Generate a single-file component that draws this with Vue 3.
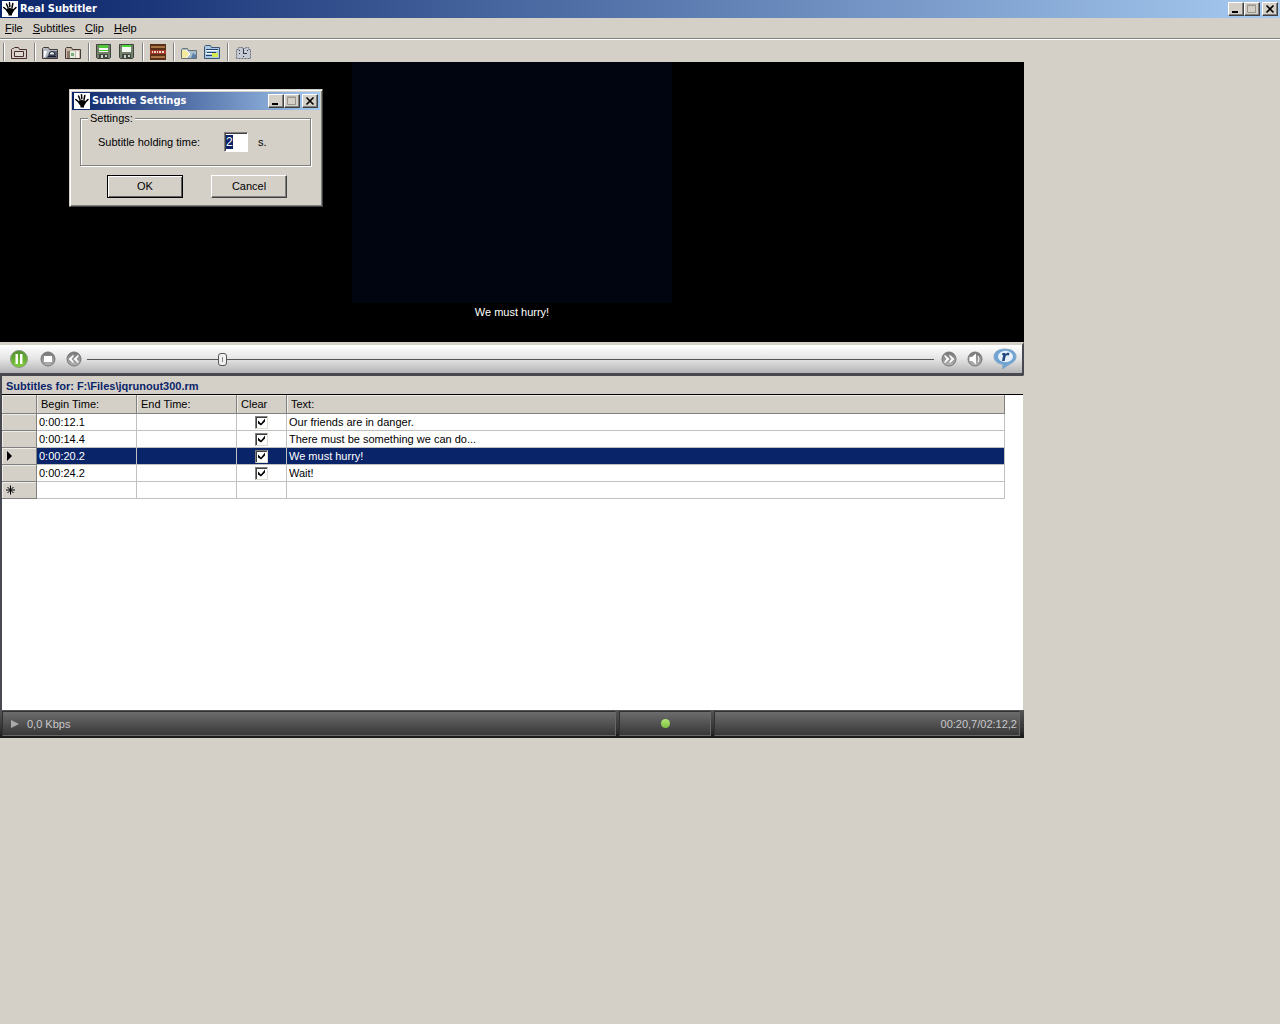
<script setup>
import { onMounted, ref } from 'vue'

const menus = ['File', 'Subtitles', 'Clip', 'Help']

const tools = [
  ['open'],
  ['clip', 'import'],
  ['save', 'saveAs'],
  ['encode'],
  ['preview', 'details'],
  ['time'],
]

const subtitles = ref([
  { begin: '0:00:12.1', end: '', clear: true, text: 'Our friends are in danger.' },
  { begin: '0:00:14.4', end: '', clear: true, text: 'There must be something we can do...' },
  { begin: '0:00:20.2', end: '', clear: true, text: 'We must hurry!' },
  { begin: '0:00:24.2', end: '', clear: true, text: 'Wait!' },
])
const current = ref(2)
const position = ref(207)
const holdingTime = ref('2')
const holdingField = ref(null)

onMounted(() => {
  holdingField.value.focus({ preventScroll: true })
  holdingField.value.select()
})
</script>

<template>
  <div class="window">
    <header class="titlebar">
      <svg class="hand" viewBox="0 0 16 16" aria-hidden="true">
        <rect width="16" height="16" fill="#fff" />
        <g stroke="#000" stroke-linecap="round" fill="none">
          <path d="M4.500 3l1.500 3.500M7.500 1.800l.3 4M10.800 2.500l-.8 4" stroke-width="1.500" />
          <path d="M1.800 6.500l3.500 3M14 6.500l-3.500 3.500" stroke-width="1.600" />
        </g>
        <path d="M5 7.500L7.500 7l3.500.5.7 2.500-1.700 3v1.500H6.500V13L4.300 10z" fill="#000" />
      </svg>
      <h1>Real Subtitler</h1>
      <div class="controls">
        <button type="button" aria-label="Minimize"><svg viewBox="0 0 12 10"><path d="M2 7h6v2H2z" fill="#000" /></svg></button>
        <button type="button" aria-label="Maximize"><svg viewBox="0 0 12 10"><path d="M1.500 1.500h8v7h-8zM1 1h9" fill="none" stroke="#98948c" /></svg></button>
        <button type="button" aria-label="Close" class="close"><svg viewBox="0 0 12 10"><path d="M2.500 1.500l7 7M9.500 1.500l-7 7" stroke="#000" stroke-width="1.600" /></svg></button>
      </div>
    </header>

    <nav class="menu">
      <a v-for="m in menus" :key="m" href="#"><u>{{ m[0] }}</u>{{ m.slice(1) }}</a>
    </nav>

    <div class="toolbar">
      <div v-for="(group, g) in tools" :key="g" class="group">
        <button v-for="t in group" :key="t" type="button" :aria-label="t">
          <svg viewBox="0 0 16 16">
            <template v-if="t === 'open'">
              <path d="M.5 14.500v-9l1-1h1l1-1h4l1 2h7v9z" fill="#d4d0c8" stroke="#4a2c2c" />
              <path d="M3.500 7.500h9v5h-9z" fill="#dedad2" stroke="#4a2c2c" />
            </template>
            <template v-else-if="t === 'clip'">
              <path d="M.5 14.500v-10l1-1h5l1 2h8v9z" fill="#b4b8c0" stroke="#443838" />
              <path d="M2 7h3l-2 6H2z" fill="#fff" />
              <path d="M4 14l5-7h6v7z" fill="#5a6478" />
              <path d="M7 11q0-3.500 3-3.500t3 3.500z" fill="#e8ecf4" stroke="#181c28" />
              <path d="M6 12.500h8" stroke="#181c28" />
            </template>
            <template v-else-if="t === 'import'">
              <path d="M.5 14.500v-10l1-1h5l1 2h8v9z" fill="#c9b8a8" stroke="#443838" />
              <path d="M2 7h3v7H2z" fill="#8a7868" />
              <path d="M5 7h5v7H5z" fill="#e2ecdc" />
              <path d="M6 9h3v3H6z" fill="#7cac80" />
              <path d="M11 7h3v7h-3z" fill="#f4f0ea" />
            </template>
            <template v-else-if="t === 'save' || t === 'saveAs'">
              <path d="M.5 .5h14v13l-1 1h-12l-1-1z" fill="#73806c" stroke="#3c463c" />
              <path d="M3 1h9v7H3z" fill="#f4f8f2" />
              <path v-if="t === 'save'" d="M3 1h9v3H3zM3 6h9v1H3z" fill="#4fc83c" />
              <path v-else d="M3 1h9v2H3z" fill="#4fd83c" />
              <path d="M3 10h9v4H3z" fill="#40483e" />
              <path d="M5 11h2v3H5zM9 11h2v2H9z" fill="#ccc" />
            </template>
            <template v-else-if="t === 'encode'">
              <path d="M0 0h16v16H0z" fill="#5a2f18" />
              <path d="M1 2h14v2H1zM1 12h14v2H1z" fill="#a87444" />
              <path d="M0 6h16v4H0z" fill="#a43828" />
              <path d="M2 7h1v2H2zM4 7h2v2H4zM7 7h1v2H7zM9 7h2v2H9zM12 7h2v2h-2z" fill="#f6dcd0" />
            </template>
            <template v-else-if="t === 'preview'">
              <path d="M.5 14.500v-9l1-1h5l1 2h8v8z" fill="#a9c0cc" stroke="#6a7478" />
              <path d="M1 6h4l4 4-4 4H1z" fill="#f5e8a0" />
              <path d="M5 6l4 4-4 4" fill="none" stroke="#fff" />
              <path d="M12 9l3 2v3h-5z" fill="#5c80ac" />
            </template>
            <template v-else-if="t === 'details'">
              <path d="M.5 14.500v-12l1-1h5l1 2h8v11z" fill="#a8c8e4" stroke="#3c5874" />
              <path d="M2 5h12v1H2zM3 8h9v1H3zM2 11h6v1H2z" fill="#24446c" />
              <path d="M2 6h12v1H2zM2 9h6v1H2z" fill="#f2f8fc" />
              <path d="M8 9h6v4H8z" fill="#d8e850" />
            </template>
            <template v-else>
              <path d="M1.500 14.500v-9h2v-2h4v1h3v-1h3v2h2v9z" fill="#c6cad2" stroke="#666c7c" stroke-dasharray="2 1" />
              <path d="M8 5h1v5H8zM9 9h3v1H9zM4 9h1v1H4zM8 12h1v1H8zM12 6h1v1h-1zM4 6h1v1H4z" fill="#303648" />
            </template>
          </svg>
        </button>
      </div>
    </div>

    <main class="workspace">
      <section class="video">
        <div class="picture"></div>
        <p>We must hurry!</p>
      </section>

      <section class="player">
        <div class="keys">
          <button type="button" aria-label="Pause" class="pause">
            <svg viewBox="0 0 22 22">
              <defs>
                <linearGradient id="green" x1="0" y1="0" x2="0" y2="1"><stop offset="0" stop-color="#4f8f2c" /><stop offset="1" stop-color="#7fd038" /></linearGradient>
                <linearGradient id="steel" x1="0" y1="0" x2="0" y2="1"><stop offset="0" stop-color="#777" /><stop offset="1" stop-color="#b4b4b4" /></linearGradient>
              </defs>
              <circle cx="11" cy="11" r="8.500" fill="url(#green)" stroke="#8a9a80" />
              <path d="M7.500 6h2.500v10H7.500zM12 6h2.500v10H12z" fill="#fff" />
            </svg>
          </button>
          <button type="button" aria-label="Stop">
            <svg viewBox="0 0 16 16"><circle cx="8" cy="8" r="7" fill="url(#steel)" stroke="#777" /><rect x="4" y="5" width="8" height="6" fill="#fff" /></svg>
          </button>
          <button type="button" aria-label="Rewind">
            <svg viewBox="0 0 16 16"><circle cx="8" cy="8" r="7" fill="url(#steel)" stroke="#777" /><path d="M7.500 3.500v2L5.500 8l2 2.500v2L2.500 8zM12.500 3.500v2l-2 2.500 2 2.500v2L7.500 8z" fill="#fff" /></svg>
          </button>
        </div>
        <input v-model="position" type="range" min="0" max="1322" aria-label="Position" class="seek" />
        <div class="keys">
          <button type="button" aria-label="Fast forward">
            <svg viewBox="0 0 16 16"><circle cx="8" cy="8" r="7" fill="url(#steel)" stroke="#777" /><path d="M3.500 3.500v2l2 2.500-2 2.500v2L8.500 8zM8.500 3.500v2l2 2.500-2 2.500v2l5-4.500z" fill="#fff" /></svg>
          </button>
          <button type="button" aria-label="Volume">
            <svg viewBox="0 0 16 16"><circle cx="8" cy="8" r="7" fill="url(#steel)" stroke="#777" /><path d="M2.500 6H5l4-3.500v11L5 10H2.500z" fill="#fff" /><path d="M11 5q2 3 0 6" fill="none" stroke="#fff" /></svg>
          </button>
          <button type="button" aria-label="RealPlayer" class="real">
            <svg viewBox="0 0 24 22">
              <path d="M12 1C18.500 1 23 4 23 8.500c0 4-3.500 6.500-7 8L9.500 21l.5-4.700C4.500 15.500 1 13 1 8.500 1 4 5.500 1 12 1z" fill="#6ea3d2" stroke="#86a9c8" />
              <ellipse cx="12.500" cy="8.500" rx="7.500" ry="5.700" fill="#e6f0f8" />
              <path d="M9.500 5h3l-.3 1.500c1-1.500 2.500-2 4.300-1.500l-.7 2.500c-1.500-.5-2.700 0-3.300 1.200L11.700 13H9l1.200-6H9z" fill="#234a80" />
            </svg>
          </button>
        </div>
      </section>

      <section class="list">
        <h2>Subtitles for: F:\Files\jqrunout300.rm</h2>
        <table>
          <colgroup><col class="c-mark" /><col class="c-time" /><col class="c-time" /><col class="c-clear" /><col /></colgroup>
          <thead>
            <tr><th></th><th>Begin Time:</th><th>End Time:</th><th>Clear</th><th>Text:</th></tr>
          </thead>
          <tbody>
            <tr v-for="(s, i) in subtitles" :key="i" :class="{ selected: i === current }" @click="current = i">
              <th scope="row"><svg v-if="i === current" viewBox="0 0 10 10"><path d="M2 0l5 5-5 5z" /></svg></th>
              <td>{{ s.begin }}</td>
              <td>{{ s.end }}</td>
              <td class="tick"><input v-model="s.clear" type="checkbox" :aria-label="'Clear ' + s.begin" /></td>
              <td>{{ s.text }}</td>
            </tr>
            <tr>
              <th scope="row"><svg viewBox="0 0 10 10"><path d="M5.500 .5v9M1 5h9M2.500 2l6 6M8.500 2l-6 6" stroke="#000" /></svg></th>
              <td></td><td></td><td></td><td></td>
            </tr>
          </tbody>
        </table>
      </section>

      <footer class="status">
        <div class="rate"><svg viewBox="0 0 8 8"><path d="M0 0l8 4-8 4z" fill="#aaa" /></svg>0,0 Kbps</div>
        <div class="led"><span></span></div>
        <div class="clock">00:20,7/02:12,2</div>
      </footer>
    </main>

    <form class="dialog" role="dialog" aria-labelledby="dialog-title" @submit.prevent>
      <div class="titlebar">
        <svg class="hand" viewBox="0 0 16 16" aria-hidden="true">
          <rect width="16" height="16" fill="#fff" />
          <g stroke="#000" stroke-linecap="round" fill="none">
            <path d="M4.500 3l1.500 3.500M7.500 1.800l.3 4M10.800 2.500l-.8 4" stroke-width="1.500" />
            <path d="M1.800 6.500l3.500 3M14 6.500l-3.500 3.500" stroke-width="1.600" />
          </g>
          <path d="M5 7.500L7.500 7l3.500.5.7 2.500-1.700 3v1.500H6.500V13L4.300 10z" fill="#000" />
        </svg>
        <h1 id="dialog-title">Subtitle Settings</h1>
        <div class="controls">
          <button type="button" aria-label="Minimize"><svg viewBox="0 0 12 10"><path d="M2 7h6v2H2z" fill="#000" /></svg></button>
          <button type="button" aria-label="Maximize"><svg viewBox="0 0 12 10"><path d="M1.500 1.500h8v7h-8zM1 1h9" fill="none" stroke="#98948c" /></svg></button>
          <button type="button" aria-label="Close" class="close"><svg viewBox="0 0 12 10"><path d="M2.500 1.500l7 7M9.500 1.500l-7 7" stroke="#000" stroke-width="1.600" /></svg></button>
        </div>
      </div>
      <fieldset>
        <legend>Settings:</legend>
        <div class="field">
          <label for="holding">Subtitle holding time:</label>
          <input id="holding" ref="holdingField" v-model="holdingTime" type="text" />
          <span>s.</span>
        </div>
      </fieldset>
      <div class="actions">
        <button type="submit" class="default">OK</button>
        <button type="button">Cancel</button>
      </div>
    </form>
  </div>
</template>

<style>
body {
  margin: 0;
  background: #d4d0c8;
}
</style>

<style scoped>
.window {
  position: relative;
  color: #000;
  font: 11px/14px "Liberation Sans", Arial, sans-serif;
}
.window *,
.window *::before {
  box-sizing: border-box;
}
button,
input {
  font: inherit;
  color: inherit;
  padding: 0;
  margin: 0;
}
button {
  border: 0;
  background: none;
}
svg {
  display: block;
}

.titlebar {
  display: flex;
  align-items: center;
  height: 18px;
  padding: 0 2px;
  background: linear-gradient(90deg, #0a246a, #a6caf0);
  color: #fff;
}
.hand {
  width: 16px;
  height: 16px;
}
.titlebar h1 {
  flex: 1;
  margin: 0 0 0 2px;
  font: bold 11px/14px "DejaVu Sans Condensed", "DejaVu Sans", sans-serif;
}
.controls {
  display: flex;
}
.controls button {
  width: 16px;
  height: 14px;
  padding: 1px;
  background: #d4d0c8;
  border: 1px solid;
  border-color: #fff #404040 #404040 #fff;
  box-shadow: inset -1px -1px #808080;
}
.controls svg {
  width: 12px;
  height: 10px;
}
.controls .close {
  margin-left: 2px;
}

.menu {
  display: flex;
  gap: 10px;
  height: 20px;
  padding: 0 5px;
  line-height: 20px;
}
.menu a {
  color: #000;
  text-decoration: none;
}

.toolbar {
  display: flex;
  height: 24px;
  border-top: 1px solid #808080;
  box-shadow: inset 0 1px #fff;
}
.group {
  display: flex;
  align-items: center;
  padding-top: 2px;
}
.group::before {
  content: "";
  width: 2px;
  height: 18px;
  margin: 0 3px;
  border-left: 1px solid #808080;
  border-right: 1px solid #fff;
}
.group button {
  padding: 0 4px 0 3px;
}
.group svg {
  width: 16px;
  height: 16px;
}

.workspace {
  width: 80%;
}
.video {
  display: flex;
  flex-direction: column;
  align-items: center;
  height: 280px;
  background: #000;
  color: #fff;
}
.picture {
  width: 320px;
  height: 241px;
  background: #00050f;
}
.video p {
  margin: 2px 0 0;
}

.player {
  display: flex;
  align-items: center;
  height: 33px;
  padding: 0 5px 0 8px;
  border-top: 3px solid #d4d0c8;
  border-right: 2px solid #484850;
  border-bottom: 2px solid #484850;
  background: linear-gradient(#fff, #e4e4e4 50%, #b4b4b4);
}
.keys {
  display: flex;
  align-items: center;
  gap: 10px;
}
.keys svg {
  width: 16px;
  height: 16px;
}
.keys .pause svg {
  width: 22px;
  height: 22px;
}
.keys .real svg {
  width: 24px;
  height: 22px;
}
.seek {
  flex: 1;
  min-width: 0;
  height: 16px;
  margin: 0 7px 0 5px;
  appearance: none;
  background: linear-gradient(#555, #555) center / 100% 1px no-repeat;
}
.seek::-webkit-slider-thumb {
  appearance: none;
  width: 9px;
  height: 13px;
  border: 1px solid #555;
  border-radius: 3px;
  background: linear-gradient(#888, #888) center / 1px 5px no-repeat, #f0f0f0;
}

.list {
  min-height: 335px;
  border: solid #484850;
  border-width: 1px 1px 0 2px;
  border-right-color: #d4d0c8;
  background: #fff;
}
.list h2 {
  height: 19px;
  margin: 0;
  padding: 0 4px;
  border-bottom: 1px solid #000;
  background: #d4d0c8;
  color: #0a246a;
  font-size: 11px;
  line-height: 20px;
}
table {
  width: calc(100% - 18px);
  table-layout: fixed;
  border-collapse: separate;
  border-spacing: 0;
}
.c-mark {
  width: 35px;
}
.c-time {
  width: 100px;
}
.c-clear {
  width: 50px;
}
th,
td {
  height: 17px;
  padding: 0 2px;
  border: solid #c0c0c0;
  border-width: 0 1px 1px 0;
  font-weight: normal;
  text-align: left;
  line-height: 16px;
}
th {
  background: #d4d0c8;
  border-color: #808080;
  box-shadow: inset 1px 1px #f0eee8;
}
thead th {
  height: 19px;
  padding: 0 4px;
}
th svg {
  width: 10px;
  height: 10px;
  margin-left: 1px;
}
.selected td {
  background: #0a246a;
  color: #fff;
}
.tick input {
  display: block;
  width: 13px;
  height: 13px;
  margin: 0 auto;
  padding: 1px;
  appearance: none;
  background: #fff;
  border: 1px solid;
  border-color: #808080 #e0dcd4 #e0dcd4 #808080;
  box-shadow: inset 1px 1px #404040;
}
.tick input:checked::before {
  content: "";
  display: block;
  width: 9px;
  height: 9px;
  background: #000;
  clip-path: polygon(1px 3px, 4px 6px, 8px 1px, 8px 4px, 4px 8px, 1px 6px);
}

.status {
  display: flex;
  gap: 3px;
  height: 28px;
  padding: 1px 4px 2px 2px;
  background: linear-gradient(#555, #333 70%, #181818);
  color: #c8c8c8;
}
.status div {
  display: flex;
  align-items: center;
  border: 1px solid #686868;
  border-top-color: #303030;
  border-left-color: #303030;
  background: linear-gradient(#6c6c6c, #383838);
}
.rate {
  flex: 20;
  padding-left: 8px;
  gap: 8px;
}
.rate svg {
  width: 8px;
  height: 8px;
}
.led {
  width: 92px;
  justify-content: center;
}
.led span {
  width: 9px;
  height: 9px;
  border-radius: 50%;
  background: linear-gradient(#b4e878, #7cc040);
}
.clock {
  flex: 10;
  justify-content: flex-end;
  padding-right: 2px;
}

.dialog {
  position: absolute;
  top: 89px;
  left: 69px;
  width: 254px;
  padding: 2px;
  background: #d4d0c8;
  border: 1px solid;
  border-color: #d4d0c8 #404040 #404040 #d4d0c8;
  box-shadow: inset 1px 1px #fff, inset -1px -1px #808080;
}
fieldset {
  margin: 1px 9px 0 8px;
  padding: 7px 17px 13px;
  border: 1px solid #808080;
  box-shadow: 1px 1px #fff, inset 1px 1px #fff;
}
legend {
  margin-left: -10px;
  padding: 0 2px;
  background: #d4d0c8;
}
.field {
  display: flex;
  align-items: center;
}
.field label {
  width: 126px;
}
.field input {
  width: 24px;
  height: 20px;
  margin-right: 10px;
  padding: 0 1px;
  background: #fff;
  border: 1px solid;
  border-color: #808080 #fff #fff #808080;
  box-shadow: inset 1px 1px #404040;
  outline: 0;
  font-size: 12px;
}
.field input::selection {
  background: #0a246a;
  color: #fff;
}
.actions {
  display: flex;
  justify-content: center;
  gap: 28px;
  padding: 9px 0 6px 2px;
}
.actions button {
  width: 76px;
  height: 23px;
  padding-bottom: 2px;
  background: #d4d0c8;
  border: 1px solid;
  border-color: #fff #404040 #404040 #fff;
  box-shadow: inset -1px -1px #808080;
}
.actions .default {
  border-color: #000;
  box-shadow: inset 1px 1px #fff, inset -1px -1px #606060;
}
</style>
